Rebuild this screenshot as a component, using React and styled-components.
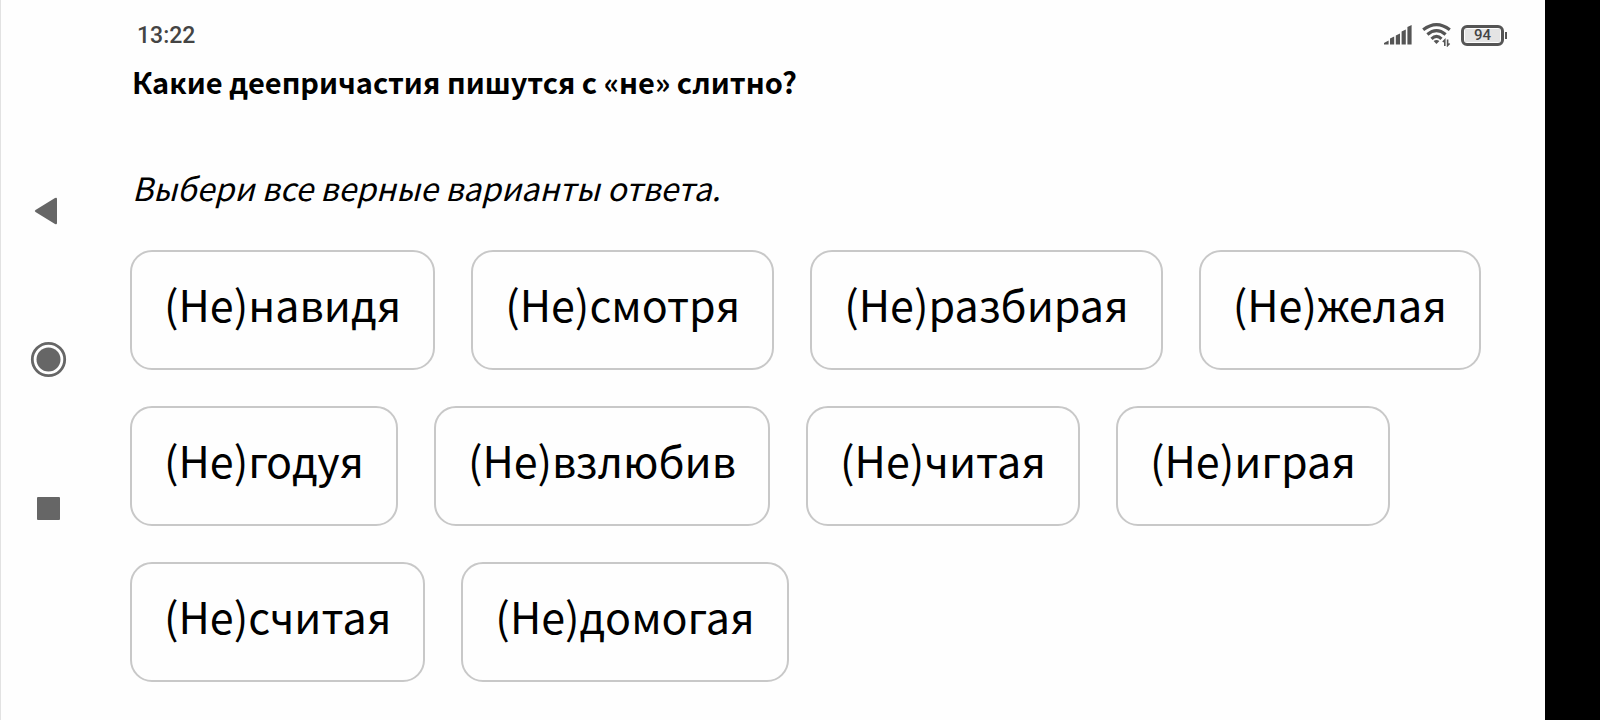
import React, { useState } from "react";
import styled, { createGlobalStyle } from "styled-components";

const GlobalStyle = createGlobalStyle`
  * { box-sizing: border-box; }
  body {
    margin: 0;
    background: #fefefe;
    color: #000;
    font-family: "Noto Sans CJK SC", "Noto Sans", sans-serif;
  }
`;

const Screen = styled.div`
  display: flex;
  min-height: 100vh;
  border-left: 1px solid #e2e2e2;
`;

const SystemNav = styled.nav`
  flex: none;
  width: 93px;
  height: 100vh;
  display: flex;
  flex-direction: column;
  align-items: center;
  justify-content: center;
  gap: 100px;
`;

const NavButton = styled.button`
  display: flex;
  padding: 0;
  border: 0;
  background: none;
  color: #666;
  cursor: pointer;
`;

const Content = styled.div`
  flex: 1;
  min-width: 0;
  padding: 19px 36px 36px;
`;

const StatusBar = styled.header`
  display: flex;
  align-items: center;
  justify-content: space-between;
  height: 32px;
  padding: 0 2px 0 7px;
`;

const Clock = styled.time`
  padding-top: 2px;
  color: #444;
  font: 500 23px/32px Roboto, sans-serif;
`;

const StatusIcons = styled.div`
  display: flex;
  align-items: center;
  gap: 10px;
  color: #555;

  svg { display: block; }
`;

const Battery = styled.div`
  display: flex;
  align-items: center;
`;

const BatteryBody = styled.span`
  width: 43px;
  height: 21px;
  padding: 1px;
  border: 3px solid #555;
  border-radius: 6px;
`;

const BatteryLevel = styled.span`
  display: block;
  background: #e4e4e4;
  color: #444;
  font: 500 15px/13px Roboto, sans-serif;
  text-align: center;
`;

const BatteryTip = styled.span`
  width: 2px;
  height: 7px;
  margin-left: 1px;
  background: #555;
`;

const Question = styled.main`
  padding-top: 10px;
`;

const Title = styled.h1`
  margin: 0;
  padding-left: 2px;
  font-size: 29px;
  line-height: 40px;
  font-weight: 700;
`;

const Hint = styled.p`
  margin: 61px 0 38px;
  padding-left: 2px;
  font-size: 32px;
  line-height: 50px;
  font-style: italic;
`;

const Options = styled.div`
  display: flex;
  flex-wrap: wrap;
  gap: 36px;
`;

const Option = styled.button`
  height: 120px;
  padding: 0 32px 14px;
  border: 2px solid ${(p) => (p.$selected ? "#666" : "#c8c8c8")};
  border-radius: 22px;
  background: #fefefe;
  color: #000;
  font-family: inherit;
  font-size: 43px;
  line-height: 60px;
  cursor: pointer;
`;

const Bezel = styled.div`
  flex: none;
  width: 55px;
  background: #000;
`;

const WORDS = [
  "навидя", "смотря", "разбирая", "желая",
  "годуя", "взлюбив", "читая", "играя",
  "считая", "домогая",
];

function BackIcon() {
  return (
    <svg width="48" height="48" viewBox="0 0 48 48" aria-hidden="true">
      <path d="M11.5 22 31 10Q33 9 33 11V35Q33 37 31 36L11.5 24Q10 23 11.5 22Z" fill="currentColor" />
    </svg>
  );
}

function HomeIcon() {
  return (
    <svg width="48" height="48" viewBox="0 0 48 48" aria-hidden="true">
      <circle cx="24.5" cy="23.5" r="16.2" fill="none" stroke="currentColor" strokeWidth="2.8" />
      <circle cx="24.5" cy="23.5" r="12" fill="currentColor" />
    </svg>
  );
}

function RecentIcon() {
  return (
    <svg width="48" height="48" viewBox="0 0 48 48" aria-hidden="true">
      <rect x="13" y="13" width="23" height="23" rx="1" fill="currentColor" />
    </svg>
  );
}

function SignalIcon() {
  return (
    <svg width="28" height="20" viewBox="0 0 28 20" aria-hidden="true">
      <g fill="currentColor">
        <path d="M0 19.6V18L4.6 15.400V19.6Z" />
        <path d="M6 19.6V13.600L10.200 11.600V19.600Z" />
        <path d="M11.800 19.600V10.400L16 8.400V19.600Z" />
        <path d="M17.600 19.600V6.400L21.800 4.400V19.600Z" />
        <path d="M23.400 19.600V2L27.600 0V19.600Z" />
      </g>
    </svg>
  );
}

function WifiIcon() {
  return (
    <svg width="29" height="24" viewBox="0 0 29 24" aria-hidden="true">
      <g fill="none" stroke="currentColor" strokeWidth="3.2">
        <path d="M1.2 6.8Q14.5 -3.5 27.8 6.8" />
        <path d="M5.4 11.4Q14.5 3.8 23.6 11.4" />
        <path d="M9.5 15.8Q14.5 11 19.5 15.8" />
      </g>
      <path d="M11.6 18Q14.500 15.800 17.400 18L14.500 21Z" fill="currentColor" />
      <path d="M22.8 23V17L20.8 19M25.600 16.500V22.500L27.600 20.500" fill="none" stroke="currentColor" strokeWidth="1.6" />
    </svg>
  );
}

export default function App() {
  const [selected, setSelected] = useState([]);
  const toggle = (word) =>
    setSelected((list) =>
      list.includes(word) ? list.filter((w) => w !== word) : [...list, word]
    );

  return (
    <>
      <GlobalStyle />
      <Screen lang="ru">
        <SystemNav>
          <NavButton type="button" aria-label="Назад"><BackIcon /></NavButton>
          <NavButton type="button" aria-label="Домой"><HomeIcon /></NavButton>
          <NavButton type="button" aria-label="Недавние"><RecentIcon /></NavButton>
        </SystemNav>
        <Content>
          <StatusBar>
            <Clock>13:22</Clock>
            <StatusIcons>
              <SignalIcon />
              <WifiIcon />
              <Battery>
                <BatteryBody><BatteryLevel>94</BatteryLevel></BatteryBody>
                <BatteryTip />
              </Battery>
            </StatusIcons>
          </StatusBar>
          <Question>
            <Title>Какие деепричастия пишутся с «не» слитно?</Title>
            <Hint>Выбери все верные варианты ответа.</Hint>
            <Options role="group" aria-label="Варианты ответа">
              {WORDS.map((word) => (
                <Option
                  key={word}
                  type="button"
                  $selected={selected.includes(word)}
                  aria-pressed={selected.includes(word)}
                  onClick={() => toggle(word)}
                >
                  (Не){word}
                </Option>
              ))}
            </Options>
          </Question>
        </Content>
        <Bezel />
      </Screen>
    </>
  );
}
